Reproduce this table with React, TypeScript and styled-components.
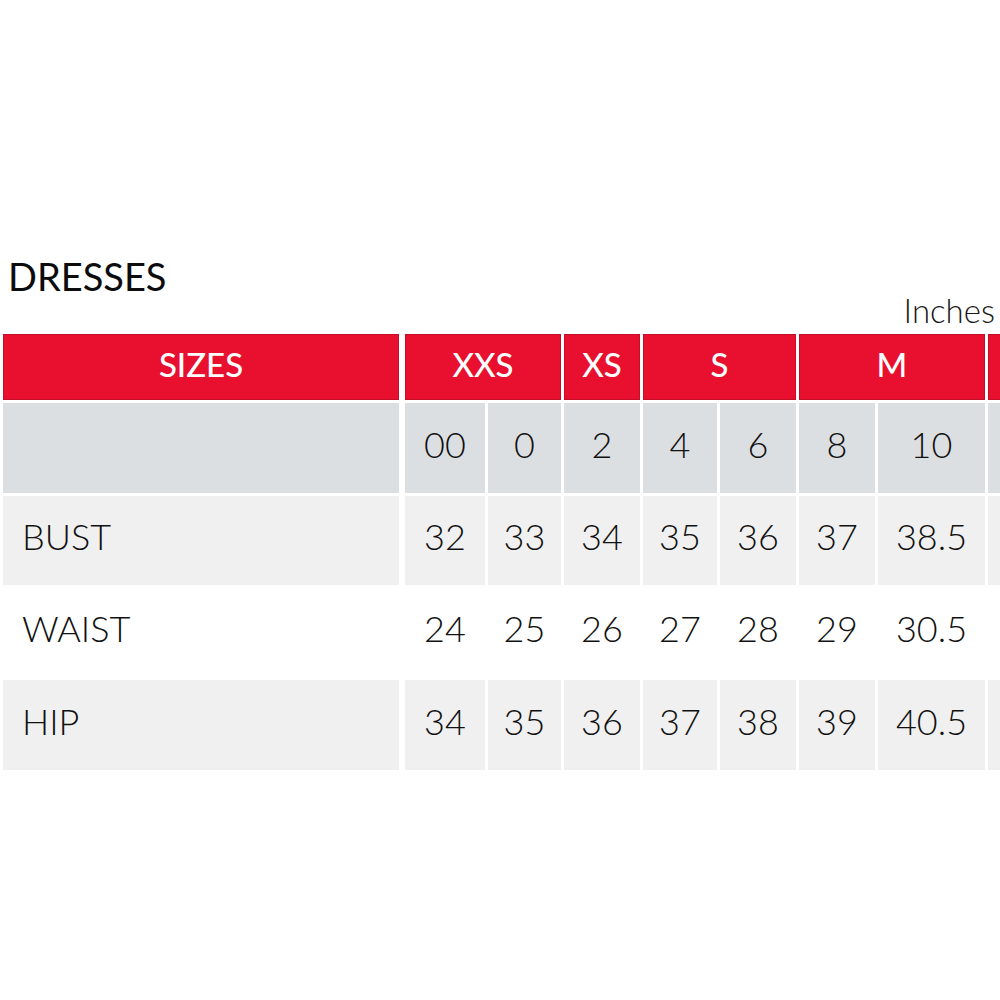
import React from "react";
import styled, { createGlobalStyle } from "styled-components";

const GlobalStyle = createGlobalStyle`
  html, body {
    margin: 0;
    padding: 0;
    background: #ffffff;
    overflow: hidden;
  }
  body {
    font-family: "Lato", "Liberation Sans", sans-serif;
    color: #111111;
  }
`;

const Page = styled.div`
  width: 1000px;
  height: 1000px;
  padding-top: 256px;
  box-sizing: border-box;
  overflow: hidden;
`;

const Title = styled.h1`
  margin: 0;
  padding-left: 8px;
  font-size: 38px;
  font-weight: 400;
  line-height: 40px;
  color: #0c0c0c;
`;

const Units = styled.div`
  text-align: right;
  padding-right: 5px;
  font-size: 33px;
  font-weight: 300;
  line-height: 28px;
  color: #1a1a1a;
  margin-bottom: 10px;
`;

const Grid = styled.div`
  display: grid;
  margin-left: 3px;
  grid-template-columns: 399px 80px 73px 76px 74px 76px 76px 107px 90px;
  grid-template-rows: 66px 90px 89px 89px 90px;
  gap: 3px;
`;

const Cell = styled.div<{ $span?: number; $wide?: boolean; $left?: boolean }>`
  display: flex;
  align-items: center;
  justify-content: ${(p) => (p.$left ? "flex-start" : "center")};
  padding-left: ${(p) => (p.$left ? "19px" : "0")};
  padding-bottom: 9px;
  box-sizing: border-box;
  grid-column: span ${(p) => p.$span ?? 1};
  margin-right: ${(p) => (p.$wide ? "3px" : "0")};
  white-space: nowrap;
`;

const HeadCell = styled(Cell)`
  background: #e8102e;
  border: 1px solid #c30f27;
  color: #ffffff;
  font-size: 33px;
  font-weight: 500;
  padding-bottom: 6px;
`;

const SubCell = styled(Cell)`
  background: #dcdfe2;
  font-size: 36px;
  font-weight: 300;
`;

const DataCell = styled(Cell)<{ $shade: boolean }>`
  background: ${(p) => (p.$shade ? "#f0f0f0" : "#ffffff")};
  font-size: 36px;
  font-weight: 300;
`;

const groups = [
  { label: "XXS", span: 2 },
  { label: "XS", span: 1 },
  { label: "S", span: 2 },
  { label: "M", span: 2 },
  { label: "", span: 1 },
];

const sizes = ["00", "0", "2", "4", "6", "8", "10", ""];

const rows = [
  { name: "BUST", values: ["32", "33", "34", "35", "36", "37", "38.5", ""], shade: true },
  { name: "WAIST", values: ["24", "25", "26", "27", "28", "29", "30.5", ""], shade: false },
  { name: "HIP", values: ["34", "35", "36", "37", "38", "39", "40.5", ""], shade: true },
];

export default function App() {
  return (
    <Page>
      <GlobalStyle />
      <Title>DRESSES</Title>
      <Units>Inches</Units>
      <Grid>
        <HeadCell $wide>SIZES</HeadCell>
        {groups.map((g, i) => (
          <HeadCell key={i} $span={g.span}>
            {g.label}
          </HeadCell>
        ))}

        <SubCell $wide />
        {sizes.map((s, i) => (
          <SubCell key={i}>{s}</SubCell>
        ))}

        {rows.map((r) => (
          <React.Fragment key={r.name}>
            <DataCell $shade={r.shade} $wide $left>
              {r.name}
            </DataCell>
            {r.values.map((v, i) => (
              <DataCell key={i} $shade={r.shade}>
                {v}
              </DataCell>
            ))}
          </React.Fragment>
        ))}
      </Grid>
    </Page>
  );
}
